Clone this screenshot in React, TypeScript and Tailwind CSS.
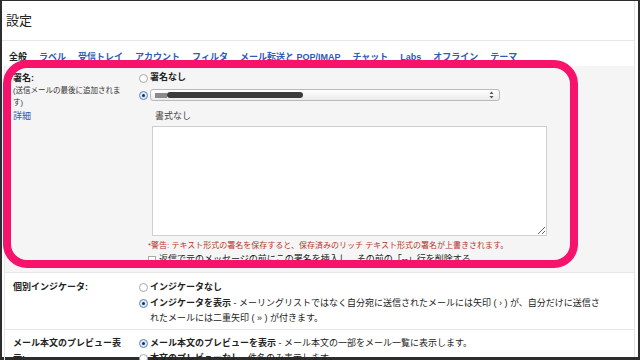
import React from 'react';

const TABS = ['ラベル', '受信トレイ', 'アカウント', 'フィルタ', 'メール転送と POP/IMAP', 'チャット', 'Labs', 'オフライン', 'テーマ'];

const Radio: React.FC<{ checked?: boolean; className?: string }> = ({ checked, className = '' }) => (
  <span
    className={`flex h-[9px] w-[9px] shrink-0 items-center justify-center rounded-full border ${
      checked ? 'border-[#5b86c8] bg-[#dbe8f8]' : 'border-[#a8a8a8] bg-white'
    } ${className}`}
  >
    {checked && <span className="h-[3px] w-[3px] rounded-full bg-[#1d2c45]" />}
  </span>
);

export default function App() {
  return (
    <div className="relative h-[360px] w-[640px] overflow-hidden bg-[#2d2d2d] pt-px pl-[2px] pr-[2px] pb-[3px] font-['Liberation_Sans','Noto_Sans_CJK_JP',sans-serif] text-[#222]">
      <div className="h-full bg-white pr-[3px]">
        <div className="h-full border-r border-[#e4e4e4]">
          <header className="flex h-[40px] items-center border-b border-[#e6e6e6] pl-[4px] text-[13px]">設定</header>

          <nav className="mt-[9px] flex gap-[12px] pl-[7px] text-[9px] font-bold leading-[14px]">
            <span>全般</span>
            {TABS.map((t) => (
              <a key={t} className="text-[#2f5bb7]">
                {t}
              </a>
            ))}
          </nav>

          <div className="mt-[2px] ml-[2px] border-l border-[#e6e6e6]">
            {/* 署名 */}
            <div className="grid grid-cols-[134px_1fr] bg-[#f5f5f5]">
              <div className="pt-[5px] pl-[8px] pr-[11px]">
                <div className="text-[9px] font-bold leading-[14px]">署名:</div>
                <div className="text-[7.5px] leading-[12px] text-[#333]">(送信メールの最後に追加されます)</div>
                <a className="mt-px block text-[9px] leading-[12px] text-[#2f5bb7]">詳細</a>
              </div>
              <div className="pt-[5px] pb-[6px]">
                <div className="flex h-[14px] items-center gap-[2px]">
                  <Radio />
                  <span className="text-[9px] font-bold">署名なし</span>
                </div>
                <div className="mt-[4px] flex h-[12px] items-center gap-[2px]">
                  <Radio checked />
                  <div className="flex h-[12px] w-[350px] items-center justify-between rounded-[3px] border border-[#b9b9b9] bg-gradient-to-b from-white to-[#ebebeb] pl-[4px] pr-[5px]">
                    <div className="flex h-[6px] items-center blur-[0.6px]">
                      <span className="h-[5px] w-[12px] bg-[#8a8a8a]" />
                      <span className="h-[6px] w-[136px] rounded-sm bg-[#3c3c3c]" />
                    </div>
                    <svg width="5" height="8" viewBox="0 0 5 8">
                      <path d="M2.5 0.5 L4.5 3 L0.5 3 Z M2.5 7.5 L4.5 5 L0.5 5 Z" fill="#555" />
                    </svg>
                  </div>
                </div>
                <div className="mt-[9px] pl-[16px] text-[9px] leading-[12px] text-[#444]">書式なし</div>
                <textarea
                  readOnly
                  className="mt-[4px] ml-[13px] block h-[110px] w-[395px] border border-[#cfcfcf] bg-white"
                />
                <div className="mt-[4px] ml-[9px] text-[8px] leading-[11px] text-[#b8352d]">
                  *警告: テキスト形式の署名を保存すると、保存済みのリッチ テキスト形式の署名が上書きされます。
                </div>
                <div className="mt-[3px] ml-[9px] flex h-[12px] items-center gap-[3px] text-[9px]">
                  <span className="h-[8px] w-[8px] border border-[#a8a8a8] bg-white" />
                  <span>返信で元のメッセージの前にこの署名を挿入し、その前の「--」行を削除する。</span>
                </div>
              </div>
            </div>

            {/* 個別インジケータ */}
            <div className="grid grid-cols-[134px_1fr] border-t border-[#e6e6e6] pt-[7px] pb-[3px] text-[9px] leading-[15px]">
              <div className="pl-[8px] pr-[11px] font-bold">個別インジケータ:</div>
              <div>
                <div className="flex items-start gap-[2px]">
                  <Radio className="mt-[3px]" />
                  <span className="font-bold">インジケータなし</span>
                </div>
                <div className="mt-px flex items-start gap-[2px]">
                  <Radio checked className="mt-[3px]" />
                  <span className="w-[456px]">
                    <b>インジケータを表示</b> - メーリングリストではなく自分宛に送信されたメールには矢印 ( › ) が、自分だけに送信されたメールには二重矢印 ( » ) が付きます。
                  </span>
                </div>
              </div>
            </div>

            {/* プレビュー */}
            <div className="grid grid-cols-[134px_1fr] border-t border-[#e6e6e6] pt-[6px] text-[9px] leading-[15px]">
              <div className="pl-[8px] pr-[11px] font-bold">メール本文のプレビュー表示:</div>
              <div>
                <div className="flex items-start gap-[2px]">
                  <Radio checked className="mt-[3px]" />
                  <span>
                    <b>メール本文のプレビューを表示</b> - メール本文の一部をメール一覧に表示します。
                  </span>
                </div>
                <div className="flex items-start gap-[2px]">
                  <Radio className="mt-[3px]" />
                  <span>
                    <b>本文のプレビューなし</b> - 件名のみ表示します。
                  </span>
                </div>
              </div>
            </div>
          </div>
        </div>
      </div>

      <div className="pointer-events-none absolute left-[3px] top-[60px] h-[208px] w-[575px] rounded-[24px] border-[8px] border-[#f7136b]" />
    </div>
  );
}
